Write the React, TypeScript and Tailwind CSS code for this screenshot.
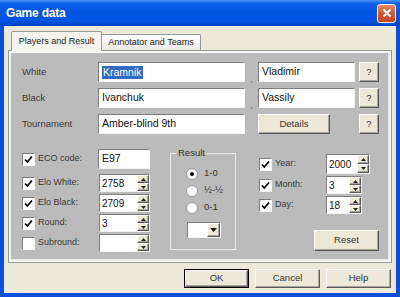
import React from "react";

const raised =
  "border border-t-white border-l-white border-r-[#5a5a5a] border-b-[#5a5a5a] shadow-[inset_-1px_-1px_0_#a8a59a] bg-[#ece9d8]";
const sunken =
  "border border-t-[#7c7c7c] border-l-[#7c7c7c] border-r-[#f4f4f4] border-b-[#f4f4f4] bg-white";

const Field = ({
  w,
  h = 20,
  children,
  selected,
}: {
  w: number;
  h?: number;
  children?: React.ReactNode;
  selected?: boolean;
}) => (
  <div
    className={`${sunken} flex items-center pl-[3px] text-[10.5px] text-[#111]`}
    style={{ width: w, height: h }}
  >
    {selected ? (
      <span className="bg-[#316ac5] text-white px-[1px] leading-[13px]">{children}</span>
    ) : (
      children
    )}
  </div>
);

const Arrow = ({ up }: { up?: boolean }) => (
  <svg width="5" height="3" viewBox="0 0 5 3">
    <polygon points={up ? "0,3 5,3 2.5,0" : "0,0 5,0 2.5,3"} fill="#222" />
  </svg>
);

const Spin = ({ w, h = 18, value }: { w: number; h?: number; value?: string }) => (
  <div className={`${sunken} flex`} style={{ width: w, height: h }}>
    <div className="flex-1 flex items-center pl-[2px] text-[10px] text-[#111]">{value}</div>
    <div className="w-[12px] flex flex-col">
      <div className={`${raised} flex-1 flex items-center justify-center`}>
        <Arrow up />
      </div>
      <div className={`${raised} flex-1 flex items-center justify-center`}>
        <Arrow />
      </div>
    </div>
  </div>
);

const Check = ({ on }: { on?: boolean }) => (
  <div className={`${sunken} w-[13px] h-[13px] flex items-center justify-center shrink-0`}>
    {on && (
      <svg width="9" height="9" viewBox="0 0 9 9">
        <polyline points="1,4.5 3.3,7 8,1.5" fill="none" stroke="#000" strokeWidth="1.7" />
      </svg>
    )}
  </div>
);

const Radio = ({ on }: { on?: boolean }) => (
  <div className="w-[12px] h-[12px] rounded-full bg-white border border-[#9a9a9a] flex items-center justify-center shrink-0">
    {on && <div className="w-[4px] h-[4px] rounded-full bg-black" />}
  </div>
);

const Btn = ({
  w,
  h = 20,
  children,
  def,
}: {
  w: number;
  h?: number;
  children: React.ReactNode;
  def?: boolean;
}) => (
  <div className={def ? "border border-black" : ""}>
    <div
      className={`${raised} flex items-center justify-center text-[9.5px] text-[#333]`}
      style={{ width: def ? w - 2 : w, height: def ? h - 2 : h }}
    >
      {children}
    </div>
  </div>
);

const CheckRow = ({
  on,
  label,
  lw,
  children,
  h = 18,
}: {
  on?: boolean;
  label: string;
  lw: number;
  children: React.ReactNode;
  h?: number;
}) => (
  <div className="flex items-center" style={{ height: h }}>
    <Check on={on} />
    <span className="ml-[3px] text-[9px] text-[#3a3a3a]" style={{ width: lw }}>
      {label}
    </span>
    {children}
  </div>
);

export default function App() {
  return (
    <div className="w-[400px] h-[297px] bg-[#0a4fdb] flex flex-col overflow-hidden font-['Liberation_Sans',Arial,sans-serif]">
      {/* title bar */}
      <div className="h-[26px] shrink-0 flex items-center justify-between pl-[6px] pr-[4px] bg-[linear-gradient(180deg,#4a93f7_0%,#0d60ea_14%,#0055e5_45%,#0052e0_80%,#0042c4_100%)]">
        <span className="text-white font-bold text-[12px] tracking-[-0.2px]">Game data</span>
        <div className="w-[19px] h-[19px] rounded-[3px] border border-white bg-[linear-gradient(180deg,#e98a66_0%,#d9532c_50%,#c7411c_100%)] flex items-center justify-center">
          <svg width="10" height="10" viewBox="0 0 10 10">
            <path d="M1.5 1.5 L8.5 8.5 M8.5 1.5 L1.5 8.5" stroke="#fff" strokeWidth="2" />
          </svg>
        </div>
      </div>

      {/* body */}
      <div className="flex-1 mx-[4px] mb-[4px] bg-[#ece9d8] flex flex-col px-[4px] pt-[5px]">
        {/* tabs */}
        <div className="flex items-end h-[19px] pl-[3px] relative z-10">
          <div className="w-[91px] h-[20px] mb-[-1px] border border-b-0 border-[#919b9c] rounded-t-[2px] bg-[#f5f4ef] flex items-center justify-center text-[9px] text-[#222]">
            Players and Result
          </div>
          <div className="w-[99px] h-[16px] border border-l-0 border-b-0 border-[#919b9c] rounded-tr-[2px] bg-[linear-gradient(180deg,#ffffff,#ecebe5)] flex items-center justify-center text-[9px] text-[#222]">
            Annotator and Teams
          </div>
        </div>

        {/* panel */}
        <div className="h-[213px] border border-[#919b9c] bg-[#f6f5f0] p-[2px] flex">
          <div className="flex-1 bg-[#bbbbbb] border-r border-b border-r-[#e4e4e4] border-b-[#e4e4e4] pl-[11px] pt-[9px]">
            <div className="flex flex-col gap-[6px]">
              <div className="flex items-center h-[20px]">
                <span className="w-[76px] text-[9.5px] text-[#3a3a3a]">White</span>
                <Field w={147} selected>
                  Kramnik
                </Field>
                <span className="w-[13px] h-[20px] flex items-end justify-center text-[8px] leading-none text-[#333] translate-y-[2px]">,</span>
                <Field w={97}>Vladimir</Field>
                <div className="w-[4px]" />
                <Btn w={20}>?</Btn>
              </div>
              <div className="flex items-center h-[20px]">
                <span className="w-[76px] text-[9.5px] text-[#3a3a3a]">Black</span>
                <Field w={147}>Ivanchuk</Field>
                <span className="w-[13px] h-[20px] flex items-end justify-center text-[8px] leading-none text-[#333] translate-y-[2px]">,</span>
                <Field w={97}>Vassily</Field>
                <div className="w-[4px]" />
                <Btn w={20}>?</Btn>
              </div>
              <div className="flex items-center h-[20px]">
                <span className="w-[76px] text-[9.5px] text-[#3a3a3a]">Tournament</span>
                <Field w={147}>Amber-blind 9th</Field>
                <div className="w-[13px]" />
                <Btn w={72}>Details</Btn>
                <div className="w-[29px]" />
                <Btn w={20}>?</Btn>
              </div>
            </div>

            <div className="flex mt-[15px]">
              {/* left column */}
              <div className="w-[128px] flex flex-col gap-[2px]">
                <CheckRow on label="ECO code:" lw={60} h={20}>
                  <Field w={52}>E97</Field>
                </CheckRow>
                <div className="h-[1px]" />
                <CheckRow on label="Elo White:" lw={61}>
                  <Spin w={51} value="2758" />
                </CheckRow>
                <CheckRow on label="Elo Black:" lw={61}>
                  <Spin w={51} value="2709" />
                </CheckRow>
                <CheckRow on label="Round:" lw={61}>
                  <Spin w={51} value="3" />
                </CheckRow>
                <CheckRow label="Subround:" lw={61}>
                  <Spin w={51} />
                </CheckRow>
              </div>

              {/* result group */}
              <div className="ml-[20px] mt-[4px] w-[66px] h-[97px] border border-[#ececec] relative pt-[11px]">
                <span className="absolute left-[5px] top-[-7px] px-[2px] bg-[#bbbbbb] text-[9.5px] leading-[12px] text-[#333]">
                  Result
                </span>
                <div className="flex items-center h-[17px] pl-[15px] gap-[6px] text-[9.5px] text-[#333]">
                  <Radio on />
                  1-0
                </div>
                <div className="flex items-center h-[17px] pl-[15px] gap-[6px] text-[9.5px] text-[#333]">
                  <Radio />
                  ½-½
                </div>
                <div className="flex items-center h-[17px] pl-[15px] gap-[6px] text-[9.5px] text-[#333]">
                  <Radio />
                  0-1
                </div>
                <div className={`${sunken} ml-[16px] mt-[6px] w-[34px] h-[16px] flex justify-end`}>
                  <div className={`${raised} w-[13px] flex items-center justify-center`}>
                    <svg width="7" height="4" viewBox="0 0 7 4">
                      <polygon points="0,0 7,0 3.5,4" fill="#111" />
                    </svg>
                  </div>
                </div>
              </div>

              {/* right column */}
              <div className="ml-[23px] mt-[5px] w-[120px] flex flex-col gap-[2px]">
                <CheckRow on label="Year:" lw={51} h={20}>
                  <Spin w={44} h={20} value="2000" />
                </CheckRow>
                <CheckRow on label="Month:" lw={51}>
                  <Spin w={36} value="3" />
                </CheckRow>
                <CheckRow on label="Day:" lw={51}>
                  <Spin w={36} value="18" />
                </CheckRow>
                <div className="self-end mt-[14px]">
                  <Btn w={65} h={21}>
                    Reset
                  </Btn>
                </div>
              </div>
            </div>
          </div>
        </div>

        {/* dialog buttons */}
        <div className="flex justify-end gap-[6px] mt-[6px] pr-[1px]">
          <Btn w={65} h={19} def>
            OK
          </Btn>
          <Btn w={65} h={19}>
            Cancel
          </Btn>
          <Btn w={65} h={19}>
            Help
          </Btn>
        </div>
      </div>
    </div>
  );
}
